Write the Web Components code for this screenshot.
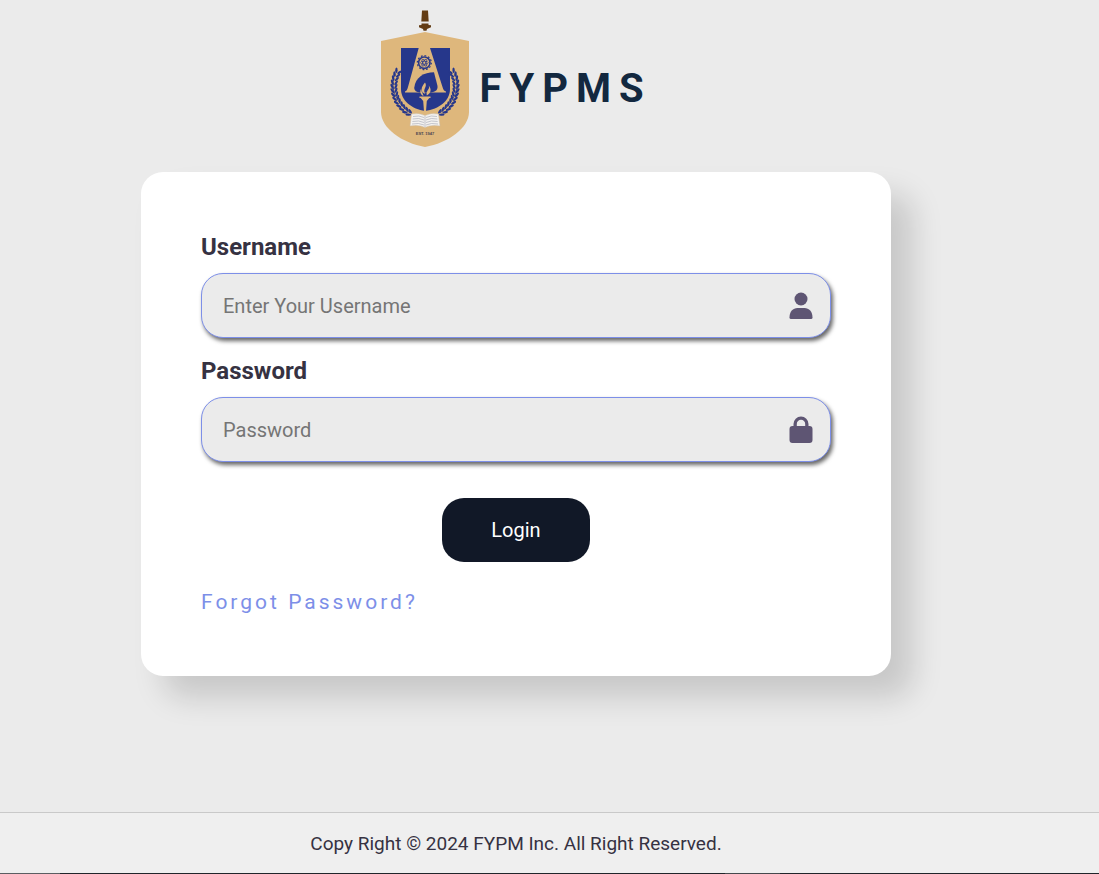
<!DOCTYPE html>
<html lang="en">
<head>
<meta charset="utf-8">
<meta name="viewport" content="width=device-width, initial-scale=1">
<title>FYPMS</title>
<style>
  body { margin: 0; background: #ebebeb; color: #363242; font-family: Roboto, "Liberation Sans", sans-serif; }
</style>
</head>
<body>
<fyp-page>
  <fyp-brand slot="header">FYPMS</fyp-brand>
  <fyp-login></fyp-login>
  <span slot="footer">Copy Right © 2024 FYPM Inc. All Right Reserved.</span>
</fyp-page>

<script>
class FypElement extends HTMLElement {
  constructor() {
    super();
    this.attachShadow({ mode: 'open' }).innerHTML = this.render();
  }
}

class FypPage extends FypElement {
  render() {
    return `
<style>
  :host { display: flex; flex-direction: column; min-height: 100vh; }
  header, main, footer { box-sizing: border-box; padding: 0 67px 0 0; display: flex; justify-content: center; }
  header { padding-top: 10px; padding-bottom: 24px; }
  main { flex: 1; align-items: flex-start; }
  footer { border-top: 1px solid #c9c9c9; background: #efefef; padding-top: 16px; padding-bottom: 14px; font-size: 19px; line-height: 30px; }
  .rule { height: 1px; background: linear-gradient(90deg, #5b5e62 60px, #20252a 60px, #20252a 725px, #45494d 725px, #45494d 780px, #20252a 780px); }
</style>
<header><slot name="header"></slot></header>
<main><slot></slot></main>
<footer><slot name="footer"></slot></footer>
<div class="rule"></div>`;
  }
}

class FypCrest extends FypElement {
  render() {
    // Laurel leaves run along a circle round the emblem; the right branch mirrors the left.
    let leaves = '';
    for (let a = 210; a >= 120; a -= 7.5) {
      const r = a * Math.PI / 180;
      const at = d => [44.5 + d * Math.cos(r), 76.5 + d * Math.sin(r)].map(n => n.toFixed(1));
      const [ox, oy] = at(32.4), [ix, iy] = at(28.6);
      leaves += `<ellipse cx="${ox}" cy="${oy}" rx="2.9" ry="1.2" transform="rotate(${a + 62} ${ox} ${oy})"/>`
              + `<ellipse cx="${ix}" cy="${iy}" rx="2.7" ry="1.1" transform="rotate(${a + 118} ${ix} ${iy})"/>`;
    }
    return `
<style>:host { display: block; } svg { display: block; }</style>
<svg width="90" height="138" viewBox="0 0 90 138" role="img" aria-label="University crest">
  <path fill="#633c14" d="M42 .5h6l.7 11h-7.4zM41.5 13.5h7v1.5l2.5.3v2l-4 1.7-.5 1.8h-3l-.5-1.8-4-1.7v-2l2.5-.3z"/>
  <path fill="#deb77c" d="M1 31 45 22 89 31V102C89 118 68 133 45 137 22 133 1 118 1 102z"/>
  <path fill="#26378b" d="M21 38H70V79C70 91 59 99 45 101 32 99 21 91 21 79z"/>
  <path fill="#deb77c" d="M38.7 38H50L62.5 77Q63.5 81 66 81.5V82.5H25V81.5Q27 81 28 77z"/>
  <path fill="#26378b" d="M40 82.6Q34.5 82 34.2 78C35.5 67 44 62.3 54 62.3L57.5 76Q58.5 81 51.5 82.6z"/>
  <g fill="none" stroke="#26378b">
    <circle cx="44.3" cy="52.7" r="5.7" stroke-width="1.6"/>
    <circle cx="44.3" cy="52.7" r="7" stroke-width="1.2" stroke-dasharray="1.8 1.86"/>
    <g stroke-width=".7"><ellipse cx="44.3" cy="52.7" rx="4" ry="1.5"/><ellipse cx="44.3" cy="52.7" rx="4" ry="1.5" transform="rotate(60 44.3 52.7)"/><ellipse cx="44.3" cy="52.7" rx="4" ry="1.5" transform="rotate(120 44.3 52.7)"/></g>
  </g>
  <g fill="#deb77c">
    <path d="M45 72.5C48 77 42 79 45.3 84 40 82 41 77 45 72.5zM48.5 75.5C51 79 45.5 80 46.8 85.5 51 83 52 79 48.5 75.5zM41 79C39.5 82 40.5 84.5 43.5 86 42.8 83 41.5 82 41 79z"/>
    <path d="M39.5 86.5h11v1.6h-1.2L46.8 91l-.8 10.5h-2L43.2 91l-2.5-2.9h-1.2z"/>
  </g>
  <g fill="#26378b">${leaves}</g>
  <g fill="#26378b" transform="translate(90 0) scale(-1 1)">${leaves}</g>
  <g fill="none" stroke="#26378b" stroke-width=".8"><path d="M14.5 62Q7.5 86 30 103"/><path d="M75.5 62Q82.5 86 60 103"/></g>
  <path fill="#f4f2ef" stroke="#c8bba6" stroke-width=".5" d="M31.5 104Q39 102.500 45 105.500 51 102.500 58.500 104L60 116Q51 114.500 45 117.500 39 114.500 30 116z"/>
  <path fill="none" stroke="#aeb0bb" stroke-width=".7" d="M33 106.500Q39 105 44 107.500M32.700 109Q39 107.500 44 110M32.400 111.500Q39 110 44 112.500M32 114Q39 112.500 44 115M57 106.500Q51 105 46 107.500M57.300 109Q51 107.500 46 110M57.600 111.500Q51 110 46 112.500M58 114Q51 112.500 46 115M45 106v11"/>
  <text x="45" y="125" text-anchor="middle" fill="#4d4651" font-family="Liberation Sans, sans-serif" font-size="4" font-weight="700">EST. 1947</text>
</svg>`;
  }
}

class FypBrand extends FypElement {
  render() {
    return `
<style>
  :host { display: flex; align-items: center; gap: 9px; }
  h1 { margin: 20px 0 0; font-size: 40px; line-height: 48px; font-weight: 700; letter-spacing: 8px; color: #13283f; }
</style>
<fyp-crest></fyp-crest>
<h1><slot></slot></h1>`;
  }
}

const ICONS = {
  user: '<circle cx="12" cy="7" r="6.500"/><path d="M.5 25.500C.5 19.500 4 16 8.500 16h7C20 16 23.500 19.500 23.500 25.500Q23.500 27 22 27H2Q.5 27 .5 25.500z"/>',
  lock: '<path fill-rule="evenodd" d="M4.500 10V8a7.500 7.500 0 0 1 15 0v2h1a3 3 0 0 1 3 3v11a3 3 0 0 1-3 3h-17a3 3 0 0 1-3-3V13a3 3 0 0 1 3-3zm3.300 0h8.400V8a4.200 4.200 0 0 0-8.400 0z"/>'
};

class FypField extends FypElement {
  render() {
    const name = this.getAttribute('name');
    return `
<style>
  :host { display: block; }
  label { display: block; margin-bottom: 11px; font-size: 24px; line-height: 30px; font-weight: 700; color: #363242; }
  .box { box-sizing: border-box; display: flex; align-items: center; height: 65px; padding: 0 17px 0 21px; border: 1px solid #7d8fe8; border-radius: 22px; background: #ebebeb; box-shadow: 2px 3px 4px #666; }
  input { flex: 1; min-width: 0; padding: 0; border: 0; outline: 0; background: none; font: inherit; font-size: 20px; line-height: 28px; color: #363242; }
  input::placeholder { color: #757575; }
  svg { flex: none; fill: #5e5573; }
</style>
<label for="field">${this.getAttribute('label')}</label>
<div class="box">
  <input id="field" name="${name}" type="${this.getAttribute('type')}" placeholder="${this.getAttribute('placeholder')}">
  <svg width="24" height="28" viewBox="0 0 24 28" aria-hidden="true">${ICONS[this.getAttribute('icon')]}</svg>
</div>`;
  }
}

class FypLogin extends FypElement {
  render() {
    return `
<style>
  :host { display: block; flex: 0 1 750px; min-width: 0; }
  form { display: flex; flex-direction: column; gap: 18px; padding: 60px; border-radius: 22px; background: #fff; box-shadow: 22px 22px 30px rgba(0, 0, 0, .15); }
  button { align-self: center; margin: 18px 0 8px; padding: 18px 49px; border: 0; border-radius: 22px; background: #111827; color: #fff; font: inherit; font-size: 20px; line-height: 28px; cursor: pointer; }
  a { align-self: flex-start; font-size: 21px; line-height: 28px; letter-spacing: 3px; color: #7d8fe8; text-decoration: none; }
</style>
<form>
  <fyp-field label="Username" name="username" type="text" placeholder="Enter Your Username" icon="user"></fyp-field>
  <fyp-field label="Password" name="password" type="password" placeholder="Password" icon="lock"></fyp-field>
  <button type="submit">Login</button>
  <a href="#forgot">Forgot Password?</a>
</form>`;
  }
}

customElements.define('fyp-crest', FypCrest);
customElements.define('fyp-brand', FypBrand);
customElements.define('fyp-field', FypField);
customElements.define('fyp-login', FypLogin);
customElements.define('fyp-page', FypPage);
</script>
</body>
</html>
